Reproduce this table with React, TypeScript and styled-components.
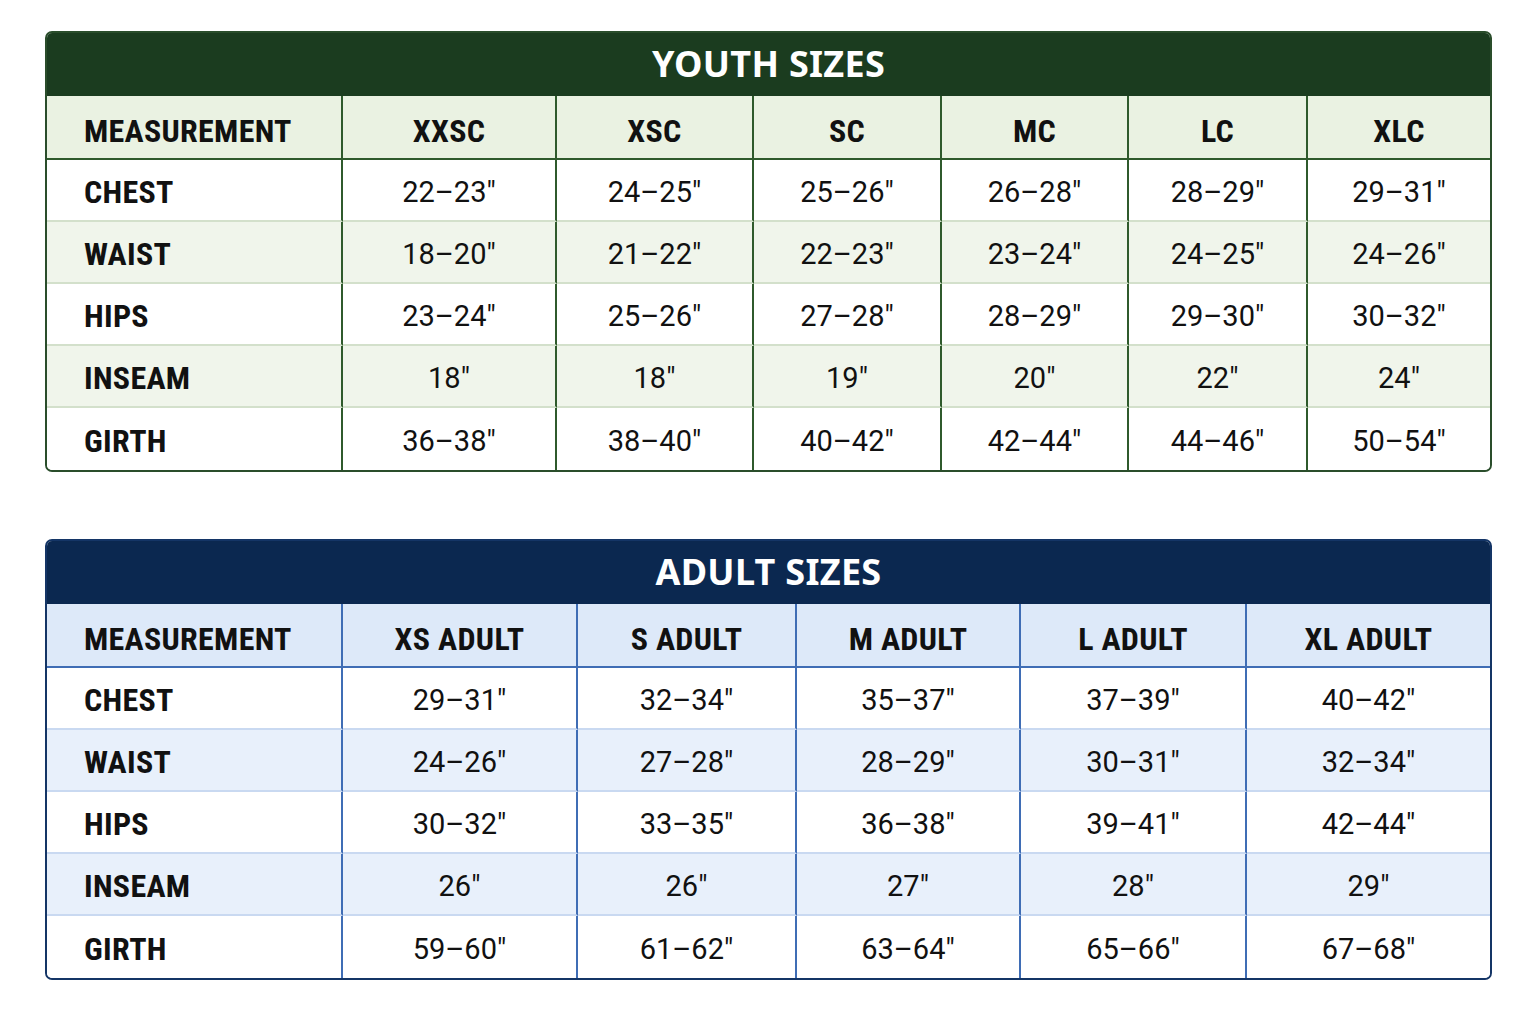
import React from "react";
import styled, { createGlobalStyle } from "styled-components";

const Global = createGlobalStyle`
  html, body { margin: 0; padding: 0; background: #ffffff; }
  body { font-family: Roboto, "Noto Sans", sans-serif; }
  *, *::before, *::after { box-sizing: border-box; }
`;

type Theme = {
  title: string;
  outer: string;
  head: string;
  stripe: string;
  vline: string;
  hline: string;
  headLine: string;
};

const green: Theme = {
  title: "#1b3c1f",
  outer: "#2a4d2b",
  head: "#eaf2e2",
  stripe: "#f0f5eb",
  vline: "#2f5a2c",
  hline: "#d3e0cb",
  headLine: "#2f5a2c",
};

const blue: Theme = {
  title: "#0b2850",
  outer: "#143566",
  head: "#dde9f9",
  stripe: "#e8f0fb",
  vline: "#3f6db5",
  hline: "#c9d9f1",
  headLine: "#3f6db5",
};

const Page = styled.div`
  display: flex;
  flex-direction: column;
  gap: 67px;
  padding: 31px 44px 0 45px;
  width: 1536px;
`;

const Card = styled.section<{ $t: Theme }>`
  border: 2px solid ${(p) => p.$t.outer};
  border-radius: 7px;
  overflow: hidden;
  background: #fff;
`;

const Title = styled.h2<{ $t: Theme }>`
  margin: 0;
  height: 63px;
  display: flex;
  align-items: center;
  justify-content: center;
  background: ${(p) => p.$t.title};
  color: #ffffff;
  font-family: "Noto Sans", sans-serif;
  font-weight: 700;
  font-size: 36px;
  letter-spacing: 0.3px;
  padding-bottom: 2px;
`;

const Grid = styled.div<{ $cols: string }>`
  display: grid;
  grid-template-columns: ${(p) => p.$cols};
`;

const Cell = styled.div<{ $t: Theme; $head?: boolean; $stripe?: boolean; $label?: boolean; $last?: boolean; $lastRow?: boolean }>`
  height: ${(p) => (p.$head ? 64 : 62)}px;
  display: flex;
  align-items: center;
  justify-content: ${(p) => (p.$label ? "flex-start" : "center")};
  padding-left: ${(p) => (p.$label ? 37 : 0)}px;
  padding-top: ${(p) => (p.$head ? 8 : 4)}px;
  background: ${(p) => (p.$head ? p.$t.head : p.$stripe ? p.$t.stripe : "#ffffff")};
  border-right: ${(p) => (p.$last ? "none" : `2px solid ${p.$t.vline}`)};
  border-bottom: ${(p) =>
    p.$lastRow ? "none" : p.$head ? `2px solid ${p.$t.headLine}` : `2px solid ${p.$t.hline}`};
  color: #111111;
  font-family: Roboto, "Noto Sans", sans-serif;
  font-stretch: ${(p) => (p.$head || p.$label ? "87.5%" : "100%")};
  font-size: ${(p) => (p.$head || p.$label ? 32 : 29)}px;
  font-weight: ${(p) => (p.$head || p.$label ? 700 : 400)};
  letter-spacing: ${(p) => (p.$head || p.$label ? "0.3px" : "0")};
  white-space: nowrap;
`;

type TableData = {
  title: string;
  cols: string;
  headers: string[];
  rows: [string, string[]][];
  theme: Theme;
};

const youth: TableData = {
  title: "YOUTH SIZES",
  cols: "296fr 214fr 197fr 188fr 187fr 179fr 182fr",
  headers: ["MEASUREMENT", "XXSC", "XSC", "SC", "MC", "LC", "XLC"],
  rows: [
    ["CHEST", ["22–23″", "24–25″", "25–26″", "26–28″", "28–29″", "29–31″"]],
    ["WAIST", ["18–20″", "21–22″", "22–23″", "23–24″", "24–25″", "24–26″"]],
    ["HIPS", ["23–24″", "25–26″", "27–28″", "28–29″", "29–30″", "30–32″"]],
    ["INSEAM", ["18″", "18″", "19″", "20″", "22″", "24″"]],
    ["GIRTH", ["36–38″", "38–40″", "40–42″", "42–44″", "44–46″", "50–54″"]],
  ],
  theme: green,
};

const adult: TableData = {
  title: "ADULT SIZES",
  cols: "296fr 235fr 219fr 224fr 226fr 243fr",
  headers: ["MEASUREMENT", "XS ADULT", "S ADULT", "M ADULT", "L ADULT", "XL ADULT"],
  rows: [
    ["CHEST", ["29–31″", "32–34″", "35–37″", "37–39″", "40–42″"]],
    ["WAIST", ["24–26″", "27–28″", "28–29″", "30–31″", "32–34″"]],
    ["HIPS", ["30–32″", "33–35″", "36–38″", "39–41″", "42–44″"]],
    ["INSEAM", ["26″", "26″", "27″", "28″", "29″"]],
    ["GIRTH", ["59–60″", "61–62″", "63–64″", "65–66″", "67–68″"]],
  ],
  theme: blue,
};

function SizeTable({ data }: { data: TableData }) {
  const t = data.theme;
  const n = data.headers.length;
  return (
    <Card $t={t}>
      <Title $t={t}>{data.title}</Title>
      <Grid $cols={data.cols}>
        {data.headers.map((h, i) => (
          <Cell key={h} $t={t} $head $label={i === 0} $last={i === n - 1}>
            {h}
          </Cell>
        ))}
        {data.rows.map(([label, vals], r) => {
          const stripe = r % 2 === 1;
          const lastRow = r === data.rows.length - 1;
          return (
            <React.Fragment key={label}>
              <Cell $t={t} $label $stripe={stripe} $lastRow={lastRow}>
                {label}
              </Cell>
              {vals.map((v, i) => (
                <Cell key={i} $t={t} $stripe={stripe} $lastRow={lastRow} $last={i === vals.length - 1}>
                  {v}
                </Cell>
              ))}
            </React.Fragment>
          );
        })}
      </Grid>
    </Card>
  );
}

export default function App() {
  return (
    <>
      <Global />
      <Page>
        <SizeTable data={youth} />
        <SizeTable data={adult} />
      </Page>
    </>
  );
}
